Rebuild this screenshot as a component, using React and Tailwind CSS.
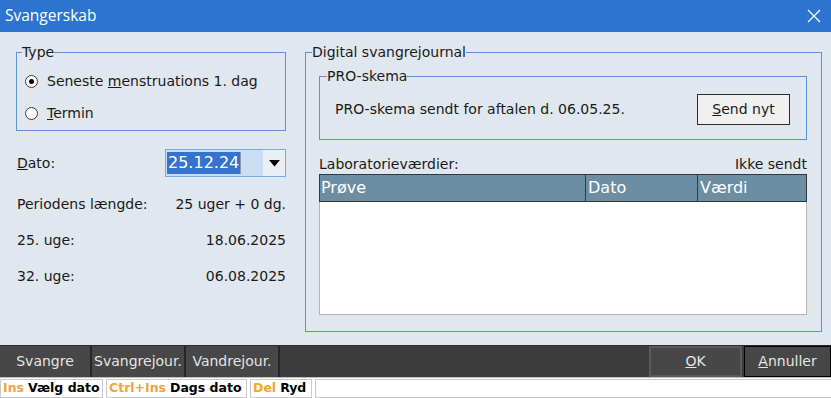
import React from 'react';

const font = { fontFamily: '"DejaVu Sans", Verdana, sans-serif' };

const Radio = ({ checked }) => (
  <span className="w-[13px] h-[13px] rounded-full border border-[#3a3a3a] bg-white flex items-center justify-center">
    {checked && <span className="w-[5px] h-[5px] rounded-full bg-black" />}
  </span>
);

const BarButton = ({ children, className = '' }) => (
  <div className={`h-full flex items-center justify-center bg-[#474747] text-[#e4e4e4] text-[14px] ${className}`}>
    {children}
  </div>
);

const StatusItem = ({ k, label, className = '' }) => (
  <div className={`h-full flex items-center gap-[4px] px-[2px] border border-[#c9c9c9] bg-white font-bold text-[12.5px] ${className}`}>
    <span className="text-[#f2a43a]">{k}</span>
    <span className="text-black">{label}</span>
  </div>
);

const App = () => {
  return (
    <div className="w-[831px] h-[398px] flex flex-col bg-[#e0e7ee] text-[#1a1a1a] text-[14px] overflow-hidden" style={font}>
      {/* title bar */}
      <div className="h-[32px] shrink-0 bg-[#2c74d1] flex items-center justify-between pl-[5px] pr-[10px] text-white">
        <span className="text-[15.5px]" style={{ fontFamily: '"Open Sans", "Noto Sans", sans-serif' }}>Svangerskab</span>
        <svg width="14" height="14" viewBox="0 0 14 14" className="stroke-white" strokeWidth="1.3">
          <path d="M1 1 L13 13 M13 1 L1 13" />
        </svg>
      </div>

      {/* body */}
      <div className="h-[313px] shrink-0 flex pt-[12px]">
        {/* left column */}
        <div className="ml-[16px] w-[270px] flex flex-col">
          <fieldset className="border border-[#5d93d6] h-[87px]">
            <legend className="ml-[5px] leading-[16px]">Type</legend>
            <div className="px-[8px] pt-[5px]">
              <div className="h-[32px] flex items-center gap-[9px]">
                <Radio checked />
                <span>Seneste <u>m</u>enstruations 1. dag</span>
              </div>
              <div className="h-[32px] flex items-center gap-[9px]">
                <Radio />
                <span><u>T</u>ermin</span>
              </div>
            </div>
          </fieldset>

          <div className="mt-[18px] h-[28px] flex items-center justify-between">
            <span className="pl-[1px]"><u>D</u>ato:</span>
            <div className="w-[121px] h-[28px] border border-[#79aae6] bg-[#c9ddf3] flex items-center">
              <span className="ml-[1px] h-[22px] px-[1px] bg-[#3474cf] text-white text-[16px] leading-[22px]">25.12.24</span>
              <span className="w-[1px] h-[22px] bg-[#8a9bb0]" />
              <div className="ml-auto h-[26px] w-[22px] bg-[#eaeff4] flex items-center justify-center">
                <svg width="11" height="7" viewBox="0 0 11 7"><path d="M0 0 H11 L5.5 6.5 Z" fill="#000" /></svg>
              </div>
            </div>
          </div>

          <div className="mt-[10px] h-[35px] flex items-center justify-between pl-[1px]">
            <span>Periodens længde:</span>
            <span>25 uger + 0 dg.</span>
          </div>
          <div className="h-[36px] flex items-center justify-between pl-[1px]">
            <span>25. uge:</span>
            <span>18.06.2025</span>
          </div>
          <div className="h-[36px] flex items-center justify-between pl-[1px]">
            <span>32. uge:</span>
            <span>06.08.2025</span>
          </div>
        </div>

        {/* right column */}
        <fieldset className="ml-[19px] w-[517px] h-[288px] border border-[#5d93d6]">
          <legend className="ml-[6px] leading-[16px]">Digital svangrejournal</legend>
          <div className="pl-[13px]">
            <fieldset className="mt-[8px] w-[488px] h-[72px] border border-[#5d93d6]">
              <legend className="ml-[7px] leading-[16px]">PRO-skema</legend>
              <div className="h-[50px] pl-[15px] flex items-center justify-between">
                <span>PRO-skema sendt for aftalen d. 06.05.25.</span>
                <button className="mr-[16px] w-[93px] h-[31px] bg-[#f0f0f0] border border-[#2b2b2b] text-[#1a1a1a]">
                  <u>S</u>end nyt
                </button>
              </div>
            </fieldset>

            <div className="w-[488px] mt-[15px] h-[18px] flex items-center justify-between">
              <span>Laboratorieværdier:</span>
              <span>Ikke sendt</span>
            </div>

            <div className="w-[488px] h-[141px] mt-[1px] bg-white border border-[#b4b4b4] flex flex-col">
              <div className="h-[28px] -m-[1px] flex bg-[#6c8da2] border border-[#2e3a42] text-white text-[16px]">
                <div className="w-[266px] pl-[1px] flex items-center border-r border-[#2e3a42]">Prøve</div>
                <div className="w-[112px] pl-[2px] flex items-center border-r border-[#2e3a42]">Dato</div>
                <div className="flex-1 pl-[2px] flex items-center">Værdi</div>
              </div>
            </div>
          </div>
        </fieldset>
      </div>

      {/* bottom button bar */}
      <div className="h-[32px] shrink-0 bg-[#3c3c3c] flex items-stretch border-t border-[#2c2c2c]">
        <BarButton className="w-[92px] border-r-2 border-[#262626]">Svangre</BarButton>
        <BarButton className="w-[94px] border-r-2 border-[#262626]">Svangrejour.</BarButton>
        <BarButton className="w-[94px] border-r-2 border-[#262626]">Vandrejour.</BarButton>
        <div className="flex-1" />
        <BarButton className="w-[93px] bg-[#3e3e3e] border-2 border-[#5b5b5b]"><u>O</u>K</BarButton>
        <div className="w-[2px]" />
        <BarButton className="w-[87px] bg-[#3e3e3e] border border-black"><u>A</u>nnuller</BarButton>
      </div>

      {/* status bar */}
      <div className="h-[21px] shrink-0 bg-white border-t border-[#bdbdbd] flex items-stretch gap-[3px] pt-[1px]">
        <StatusItem k="Ins" label="Vælg dato" className="w-[103px]" />
        <StatusItem k="Ctrl+Ins" label="Dags dato" className="w-[141px]" />
        <StatusItem k="Del" label="Ryd" className="w-[62px]" />
        <div className="flex-1 border border-[#c9c9c9] border-r-0" />
      </div>
    </div>
  );
};

export default App;
